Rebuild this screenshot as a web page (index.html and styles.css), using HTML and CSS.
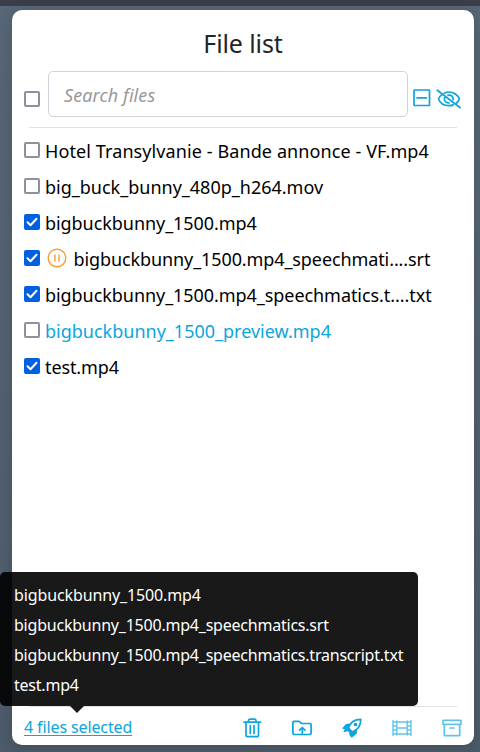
FILE: index.html
```
<!DOCTYPE html>
<html lang="en">
<head>
<meta charset="utf-8">
<title>File list</title>
<link rel="stylesheet" href="styles.css">
</head>
<body>
<div class="topbar"></div>
<main class="card">
  <h1 class="title">File list</h1>
  <div class="search-row">
    <span class="check"></span>
    <input class="search" type="text" placeholder="Search files" aria-label="Search files">
    <svg class="icon collapse" viewBox="0 0 18 18"><rect x="1" y="1" width="15.5" height="15.5" rx=".6"/><path d="M4 8.8h9.5"/></svg>
    <svg class="icon hide" viewBox="0 0 26 20"><path d="M1.3 1.2 24.2 18.7M8.2 4.2C10 3.4 11.5 3 13 3c4.800 0 9 3 10.300 7-.6 1.600-1.500 2.900-2.700 4M5.300 6.200C3.900 7.300 3 8.600 2.500 10c1.400 4 5.500 6.700 10.500 6.700 1.500 0 3-.3 4.200-.8M12 6.300c3-.7 5.500 1.500 5.200 4.400M8.500 8.800c-.7 3 1.400 5.200 4.500 5"/></svg>
  </div>
  <ul class="files">
    <li class="file"><span class="check"></span><span class="name wide">Hotel Transylvanie - Bande annonce - VF.mp4</span></li>
    <li class="file"><span class="check"></span><span class="name">big_buck_bunny_480p_h264.mov</span></li>
    <li class="file"><span class="check on"><svg viewBox="0 0 16 16"><path d="m3.500 8.200 3 3 6-6.500"/></svg></span><span class="name snug">bigbuckbunny_1500.mp4</span></li>
    <li class="file"><span class="check on"><svg viewBox="0 0 16 16"><path d="m3.500 8.200 3 3 6-6.500"/></svg></span><svg class="pause" viewBox="0 0 20 20"><circle cx="10" cy="10" r="8.800"/><path d="M8 6.500v7M12 6.500v7"/></svg><span class="name tight">bigbuckbunny_1500.mp4_speechmati....srt</span></li>
    <li class="file"><span class="check on"><svg viewBox="0 0 16 16"><path d="m3.500 8.200 3 3 6-6.500"/></svg></span><span class="name snug">bigbuckbunny_1500.mp4_speechmatics.t....txt</span></li>
    <li class="file"><span class="check"></span><span class="name link">bigbuckbunny_1500_preview.mp4</span></li>
    <li class="file"><span class="check on"><svg viewBox="0 0 16 16"><path d="m3.500 8.200 3 3 6-6.500"/></svg></span><span class="name tight">test.mp4</span></li>
  </ul>
  <footer class="footer">
    <div class="selection">
      <a class="selected" href="#">4 files selected</a>
      <div class="tooltip">
        <div class="short">bigbuckbunny_1500.mp4</div>
        <div>bigbuckbunny_1500.mp4_speechmatics.srt</div>
        <div>bigbuckbunny_1500.mp4_speechmatics.transcript.txt</div>
        <div>test.mp4</div>
      </div>
    </div>
    <div class="actions">
      <svg class="icon" viewBox="0 0 20 20"><path d="M2 4.200h16.500M6.500 4V2.800Q6.500 1.200 8 1.200h4.500Q14 1.200 14 2.800V4M4 4.500V17q0 1.700 1.700 1.700h9.100q1.700 0 1.700-1.700V4.500M8.300 7.500v8M12 7.500v8"/></svg>
      <svg class="icon" viewBox="0 0 20 20"><path d="M.9 15.300V4.500q0-1.200 1.200-1.200h5L9.600 5.500h8.300q1.200 0 1.200 1.200v8.600q0 1.200-1.200 1.200H2.100Q.9 16.500.9 15.300ZM10.300 15V9.500M7.600 12.100 10.300 9.500l2.700 2.600"/></svg>
      <svg class="icon" viewBox="0 0 20 20"><path d="M6.500 10C8 5 12 1.300 18.800 1.300 18.800 7.500 15.500 12 10.300 14Z"/><circle cx="13.500" cy="6.500" r="1" fill="currentColor"/><path class="solid" d="M8.500 5.500 4 6 0 10.500l2.700.7-1.200 3 4.500-1 1.500 1.500-.3 2.300 2.500 2.800 5-4 .5-4.500-5 2.500-3.700-4Z"/></svg>
      <svg class="icon dim film" viewBox="0 0 20 20"><path d="M1 2.500v15M19 2.500v15M4.800 3v14M15.200 3v14M1 4h18M1 16h18M4.800 10h10.400M1 8h3.800M1 12h3.800M15.200 8H19M15.200 12H19"/></svg>
      <svg class="icon dim" viewBox="0 0 20 20"><path d="M1 2.300h18v4H1ZM2.300 6.500v11.200h15.400V6.500M8 10h4"/></svg>
    </div>
  </footer>
</main>
</body>
</html>
```
FILE: styles.css
```
* { box-sizing: border-box; }
body {
  margin: 0;
  height: 752px;
  overflow: hidden;
  display: flex;
  flex-direction: column;
  background: linear-gradient(#576777, #4d5b6a);
  font-family: "Noto Sans", "Open Sans", sans-serif;
  color: #000;
}
.topbar { height: 6px; flex: none; background: #3b3e48; }
.card {
  width: 462px;
  height: 735px;
  margin: 4px 0 0 12px;
  padding: 0 12px;
  display: flex;
  flex-direction: column;
  background: #fff;
  border-radius: 10px;
  box-shadow: 0 4px 16px rgba(0, 0, 0, .16);
}
.title {
  margin: 0;
  height: 61px;
  padding-top: 17px;
  text-align: center;
  font-size: 25px;
  line-height: 33px;
  font-weight: 400;
  letter-spacing: -.1px;
  color: #212529;
}
.search-row {
  display: flex;
  height: 46px;
}
.check {
  flex: none;
  width: 16px;
  height: 16px;
  border: 2px solid #8f8f9d;
  border-radius: 2px;
  background: #fff;
}
.check.on { border: 0; background: #0060df; }
.check svg { display: block; width: 16px; height: 16px; fill: none; stroke: #fff; stroke-width: 2; stroke-linecap: round; stroke-linejoin: round; }
.search-row .check { margin-top: 20px; }
.search {
  flex: none;
  width: 360px;
  height: 46px;
  margin-left: 8px;
  padding: 2px 15px 0;
  border: 1px solid #ced4da;
  border-radius: 5px;
  font: italic 18px "Noto Sans", sans-serif;
  letter-spacing: .1px;
  outline: 0;
}
.search::placeholder { color: #999; opacity: 1; }
.icon {
  flex: none;
  width: 20px;
  height: 20px;
  fill: none;
  stroke: currentColor;
  stroke-width: 1.7;
  stroke-linejoin: round;
  stroke-linecap: round;
  color: #0ca5dc;
}
.icon.collapse { width: 18px; height: 18px; margin: 18px 0 0 5px; }
.icon.hide { width: 26px; height: 20px; margin: 18px 0 0 5px; }
.icon .solid { fill: currentColor; stroke: none; }
.icon.dim { color: #60c4e8; }
.icon.film { stroke-width: 1.4; }
.files {
  list-style: none;
  margin: 10px 5px 0;
  padding: 5px 0 0;
  border-top: 1px solid #dee2e6;
}
.file {
  display: flex;
  height: 36px;
  margin-left: -5px;
  align-items: center;
}
.file .check { margin-top: -2px; }
.pause { flex: none; width: 20px; height: 20px; margin: -2px 1.5px 0 7px; fill: none; stroke: #fb9b37; stroke-width: 1.4; }
.name {
  margin-left: 5px;
  font-size: 18px;
  line-height: 36px;
  white-space: pre;
}
.name.wide { letter-spacing: .1px; }
.name.snug { letter-spacing: -.06px; }
.name.tight { letter-spacing: -.1px; }
.link { color: #0ca5dc; }
.footer {
  display: flex;
  justify-content: space-between;
  height: 39px;
  margin: auto 5px 0;
  border-top: 1px solid #dee2e6;
}
.selection { position: relative; margin-left: -5px; }
.selected {
  display: block;
  font-size: 16px;
  line-height: 41px;
  letter-spacing: -.12px;
  color: #0ca5dc;
  white-space: nowrap;
  text-decoration-thickness: 1px;
  text-underline-offset: 2px;
}
.tooltip {
  position: absolute;
  left: -24px;
  bottom: 39px;
  width: 418px;
  height: 134px;
  padding: 8px 14px 6px;
  border-radius: 5px;
  background: rgba(0, 0, 0, .9);
  color: #fff;
  font-size: 16px;
  line-height: 30px;
  letter-spacing: -.22px;
  white-space: nowrap;
}
.tooltip .short { letter-spacing: -.12px; }
.tooltip::after {
  content: "";
  position: absolute;
  left: 70px;
  top: 134px;
  border: 7px solid transparent;
  border-top-color: rgba(0, 0, 0, .9);
  border-bottom: 0;
}
.actions { display: flex; gap: 30px; margin: 11px -5px 0 0; }
```
